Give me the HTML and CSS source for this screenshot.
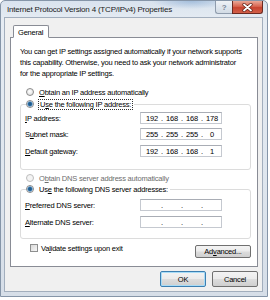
FILE: index.html
```html
<!DOCTYPE html>
<html lang="en">
<head>
    <meta charset="UTF-8">
    <title>Internet Protocol Version 4 (TCP/IPv4) Properties</title>
    <link rel="stylesheet" href="styles.css">
</head>
<body>
    <div class="window">
        <div class="titlebar">
            <span class="title">Internet Protocol Version 4 (TCP/IPv4) Properties</span>
            <div class="caption-btns">
                <span class="cap-help">?</span>
                <span class="cap-close">
                    <svg width="11" height="9" viewBox="0 0 11 9">
                        <path d="M2 1.5 L9 7.5 M9 1.5 L2 7.5" stroke="#5a1d14" stroke-width="3.2" stroke-linecap="round"/>
                        <path d="M2 1.5 L9 7.5 M9 1.5 L2 7.5" stroke="#ffffff" stroke-width="1.8" stroke-linecap="round"/>
                    </svg>
                </span>
            </div>
        </div>
        <div class="client">
            <div class="tabs">
                <span class="tab">General</span>
            </div>
            <div class="panel">
                <p class="intro">You can get IP settings assigned automatically if your network supports<br>this capability. Otherwise, you need to ask your network administrator<br>for the appropriate IP settings.</p>

                <div class="option first-option">
                    <span class="radio"></span>
                    <span><u>O</u>btain an IP address automatically</span>
                </div>

                <div class="group ip-group">
                    <div class="option legend">
                        <span class="radio on"></span>
                        <span class="focus">U<u>s</u>e the following IP address:</span>
                    </div>
                    <div class="field-row">
                        <span class="field-label"><u>I</u>P address:</span>
                        <div class="ip-input">
                            <span class="octet">192</span><span class="dot">.</span><span class="octet">168</span><span class="dot">.</span><span class="octet">168</span><span class="dot">.</span><span class="octet">178</span>
                        </div>
                    </div>
                    <div class="field-row">
                        <span class="field-label">S<u>u</u>bnet mask:</span>
                        <div class="ip-input">
                            <span class="octet">255</span><span class="dot">.</span><span class="octet">255</span><span class="dot">.</span><span class="octet">255</span><span class="dot">.</span><span class="octet">0</span>
                        </div>
                    </div>
                    <div class="field-row">
                        <span class="field-label"><u>D</u>efault gateway:</span>
                        <div class="ip-input">
                            <span class="octet">192</span><span class="dot">.</span><span class="octet">168</span><span class="dot">.</span><span class="octet">168</span><span class="dot">.</span><span class="octet">1</span>
                        </div>
                    </div>
                </div>

                <div class="option disabled dns-auto">
                    <span class="radio"></span>
                    <span>O<u>b</u>tain DNS server address automatically</span>
                </div>

                <div class="group dns-group">
                    <div class="option legend">
                        <span class="radio on"></span>
                        <span>Us<u>e</u> the following DNS server addresses:</span>
                    </div>
                    <div class="field-row">
                        <span class="field-label"><u>P</u>referred DNS server:</span>
                        <div class="ip-input">
                            <span class="octet"></span><span class="dot">.</span><span class="octet"></span><span class="dot">.</span><span class="octet"></span><span class="dot">.</span><span class="octet"></span>
                        </div>
                    </div>
                    <div class="field-row">
                        <span class="field-label"><u>A</u>lternate DNS server:</span>
                        <div class="ip-input">
                            <span class="octet"></span><span class="dot">.</span><span class="octet"></span><span class="dot">.</span><span class="octet"></span><span class="dot">.</span><span class="octet"></span>
                        </div>
                    </div>
                </div>

                <div class="bottom-row">
                    <div class="option check-option">
                        <span class="checkbox"></span>
                        <span>Va<u>l</u>idate settings upon exit</span>
                    </div>
                    <button class="btn advanced">Ad<u>v</u>anced...</button>
                </div>
            </div>
            <div class="dialog-buttons">
                <button class="btn default">OK</button>
                <button class="btn">Cancel</button>
            </div>
        </div>
    </div>
</body>
</html>
```

FILE: styles.css
```css
body {
    margin: 0;
    background-color: #fff;
    font-family: "Liberation Sans", Arial, sans-serif;
    font-size: 7.5px;
    letter-spacing: -0.2px;
    color: #000;
}
u {
    text-decoration-thickness: 1px;
    text-underline-offset: 1px;
}
.window {
    width: 268px;
    height: 297px;
    box-sizing: border-box;
    border: 1px solid #8595a8;
    border-radius: 5px 5px 0 0;
    padding: 0 4px 4px 3px;
    display: flex;
    flex-direction: column;
    background:
        radial-gradient(ellipse 40px 8px at 190px 0px, rgba(120, 160, 205, 0.55), rgba(120, 160, 205, 0)),
        linear-gradient(#d9e3ee, #e6ecf3 20px, #dfe6ee 60%, #d6dee8);
}
.titlebar {
    height: 16px;
    display: flex;
    align-items: flex-start;
}
.title {
    flex: 1;
    padding: 4px 0 0 3px;
    font-size: 8px;
    color: #1b1b1b;
    white-space: nowrap;
}
.caption-btns {
    display: flex;
}
.cap-help,
.cap-close {
    height: 13px;
    box-sizing: border-box;
    display: flex;
    align-items: center;
    justify-content: center;
}
.cap-help {
    width: 17px;
    border: 1px solid #8f9cad;
    border-top: none;
    border-right: none;
    border-radius: 0 0 0 3px;
    background: linear-gradient(#eef2f6, #dfe6ee 50%, #d2dbe5);
    color: #7b8798;
    font-size: 8px;
    font-weight: bold;
}
.cap-close {
    width: 31px;
    border: 1px solid #6b2a22;
    border-top: none;
    border-radius: 0 0 3px 0;
    background: linear-gradient(#e9a898, #d86550 45%, #c8432f 55%, #d2604a);
}
.client {
    flex: 1;
    background-color: #f0f0f0;
    border: 1px solid #a2aebd;
    padding: 7px 4px 0 5px;
    display: flex;
    flex-direction: column;
}
.tabs {
    display: flex;
    padding-left: 3px;
    margin-bottom: -1px;
    position: relative;
    z-index: 1;
}
.tab {
    height: 13px;
    box-sizing: border-box;
    padding: 2px 5px 0 4px;
    background-color: #fff;
    border: 1px solid #898c95;
    border-bottom-color: #fff;
    border-radius: 2px 2px 0 0;
}
.panel {
    height: 230px;
    box-sizing: border-box;
    background-color: #fff;
    border: 1px solid #898c95;
    padding: 8px 6px 0 9px;
}
.intro {
    margin: 0;
    line-height: 11px;
    white-space: nowrap;
}
.option {
    display: flex;
    align-items: center;
    gap: 5px;
    height: 12px;
    white-space: nowrap;
}
.first-option {
    margin: 7px 0 0 6px;
}
.disabled {
    color: #6d6d6d;
}
.radio {
    width: 8px;
    height: 8px;
    box-sizing: border-box;
    border-radius: 50%;
    border: 1px solid #8a8a8a;
    background: radial-gradient(circle at 45% 40%, #ffffff, #e4e4e4 70%, #cfcfcf);
    flex-shrink: 0;
}
.radio.on {
    background: radial-gradient(circle, #1f5b8c 0 1.4px, #5c9bd0 2.3px, #e9eef3 3px);
}
.disabled .radio {
    border-color: #bdbdbd;
    background: #f4f4f4;
}
.focus {
    outline: 1px dotted #333;
    outline-offset: 0;
    padding: 0 1px;
}
.group {
    border: 1px solid #dcdcdc;
    border-radius: 3px;
    padding: 0 0 0 4px;
}
.ip-group {
    margin-top: 6px;
    padding-bottom: 12px;
}
.dns-group {
    margin-top: 5px;
    padding-bottom: 10px;
}
.legend {
    width: max-content;
    margin: -7px 0 0 1px;
    padding-right: 2px;
    background-color: #fff;
}
.field-row {
    display: flex;
    align-items: center;
    height: 12px;
    margin-top: 5px;
}
.ip-group .legend + .field-row {
    margin-top: 2px;
}
.ip-group .legend + .field-row + .field-row {
    margin-top: 4px;
}
.dns-group .legend + .field-row {
    margin-top: 4px;
}
.field-label {
    width: 115px;
    white-space: nowrap;
}
.ip-input {
    width: 82px;
    height: 12px;
    box-sizing: border-box;
    border: 1px solid #c5c9d0;
    border-top-color: #a9adb5;
    background-color: #fff;
    padding-left: 3px;
    display: flex;
    align-items: center;
}
.octet {
    width: 16px;
    text-align: center;
}
.dot {
    width: 4px;
    text-align: center;
}
.dns-auto {
    margin: 2px 0 0 6px;
}
.bottom-row {
    display: flex;
    justify-content: space-between;
    align-items: flex-start;
    margin-top: 4px;
}
.check-option {
    margin: -1px 0 0 10px;
}
.checkbox {
    width: 8px;
    height: 8px;
    box-sizing: border-box;
    border: 1px solid #8e8f8f;
    background: linear-gradient(135deg, #d9d9d9, #f7f7f7);
    margin-right: -2px;
}
.btn {
    height: 15px;
    box-sizing: border-box;
    border: 1px solid #707070;
    border-radius: 2px;
    padding: 0;
    background: linear-gradient(#f3f3f3, #ebebeb 48%, #dddddd 52%, #cfcfcf);
    font-family: inherit;
    font-size: 7.5px;
    letter-spacing: -0.2px;
    color: #000;
}
.advanced {
    width: 56px;
    height: 13px;
    margin-top: 2px;
}
.dialog-buttons {
    display: flex;
    justify-content: flex-end;
    gap: 6px;
    margin-top: 4px;
}
.dialog-buttons .btn {
    width: 46px;
    height: 16px;
}
.btn.default {
    border-color: #3c7fb1;
    box-shadow: inset 0 0 0 1px #a8dcf7;
}
```
